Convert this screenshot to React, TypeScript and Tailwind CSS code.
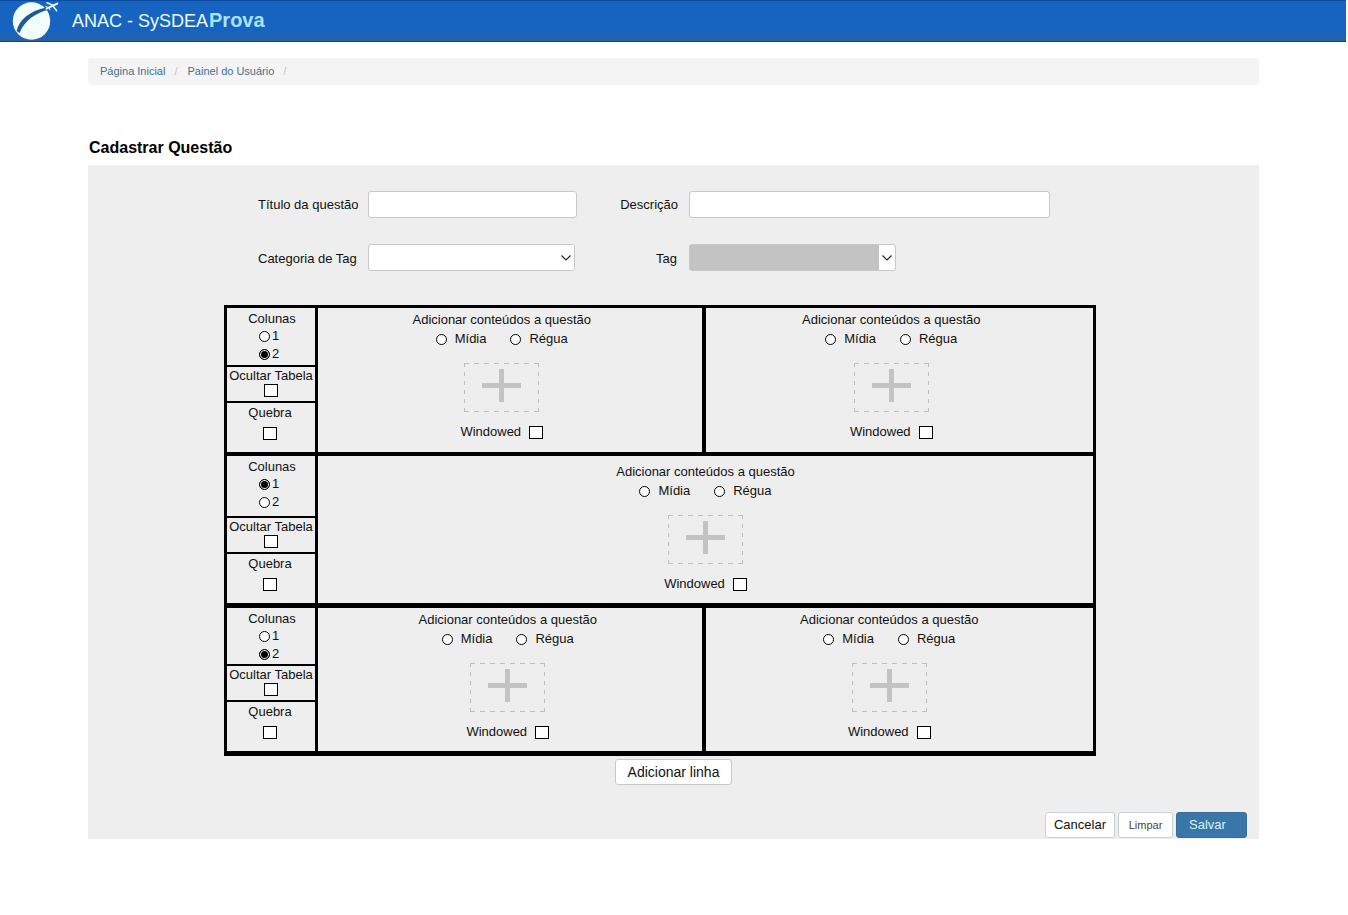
import React from "react";

type Cell = { id: string; inset: string };
type Row = { id: string; columns: 1 | 2; frame: string; top: string; cells: Cell[] };

const rows: Row[] = [
  {
    id: "r1",
    columns: 2,
    frame: "min-h-[148px] border-b-4 grid-cols-[91px_minmax(0,1fr)_minmax(0,1fr)]",
    top: "pt-[2px]",
    cells: [
      { id: "r1a", inset: "pr-4" },
      { id: "r1b", inset: "pr-4" },
    ],
  },
  {
    id: "r2",
    columns: 1,
    frame: "min-h-[152px] border-b-[5px] grid-cols-[91px_minmax(0,1fr)]",
    top: "pt-[6px]",
    cells: [{ id: "r2a", inset: "pr-0" }],
  },
  {
    id: "r3",
    columns: 2,
    frame: "min-h-[148px] border-b-[5px] grid-cols-[91px_minmax(0,1fr)_minmax(0,1fr)]",
    top: "pt-[2px]",
    cells: [
      { id: "r3a", inset: "pr-1" },
      { id: "r3b", inset: "pr-5" },
    ],
  },
];

const radioClass =
  "size-[11px] shrink-0 appearance-none rounded-full border border-black bg-white checked:bg-black checked:shadow-[inset_0_0_0_1px_#ffffff]";
const checkClass =
  "h-[13px] w-[14px] shrink-0 appearance-none border border-black bg-white checked:bg-black checked:shadow-[inset_0_0_0_2px_#ffffff]";
const fieldClass = "h-[27px] w-full rounded-[3px] border border-[#c8c8c8] bg-white px-2 text-[13px]";

function Logo() {
  return (
    <svg viewBox="0 0 48 42" className="h-[42px] w-12 shrink-0" aria-hidden="true">
      <circle cx="19.5" cy="21" r="18.7" fill="#f2fdfd" />
      <path d="M4.6 31C7 20.5 17 11 34.5 7.6L36 9.8C24 13 12.5 20.5 7.6 33Z" fill="#1f5c92" />
      <g stroke="#e6fafa" strokeLinecap="round" fill="none">
        <path d="M34.5 8.6L45.3 3.6" strokeWidth="1.9" />
        <path d="M41.5 5.4L35 2.8" strokeWidth="1.5" />
        <path d="M41 6L44.6 10.8" strokeWidth="1.5" />
        <path d="M36.3 7.6L33.6 6.2M37 7.8L38 9.9" strokeWidth="1" />
      </g>
    </svg>
  );
}

function SelectField({ id, disabled = false }: { id: string; disabled?: boolean }) {
  return (
    <div className="relative w-[207px]">
      <select
        id={id}
        disabled={disabled}
        className={
          disabled
            ? "block h-[27px] w-full appearance-none rounded-[3px] border border-[#c8c8c8] bg-[#c3c3c3] px-2 text-[13px]"
            : "block h-[27px] w-full appearance-none rounded-[3px] border border-[#c8c8c8] bg-white px-2 text-[13px]"
        }
      >
        <option value=""></option>
      </select>
      <span className="pointer-events-none absolute inset-y-px right-px flex w-4 items-center justify-center rounded-r-[2px] bg-white">
        <svg viewBox="0 0 10 6" className="h-[6px] w-[10px]" aria-hidden="true">
          <path d="M0.5 0.5L5 5L9.5 0.5" fill="none" stroke="#222222" strokeWidth="1.1" />
        </svg>
      </span>
    </div>
  );
}

function RowOptions({ row }: { row: Row }) {
  return (
    <div className="flex flex-col border-r-[3px] border-black text-center leading-[18px]">
      <fieldset className="flex flex-1 flex-col items-center border-b-2 border-black pt-[2px]">
        <legend className="float-left h-[17px] w-full pl-[2px]">Colunas</legend>
        {[1, 2].map((n) => (
          <label key={n} className="flex h-[18px] items-center gap-[2px] pr-1">
            <input type="radio" name={`${row.id}-columns`} defaultChecked={row.columns === n} className={radioClass} />
            {n}
          </label>
        ))}
      </fieldset>
      <label className="flex h-9 flex-col items-center border-b-2 border-black whitespace-nowrap">
        <span className="leading-[17px]">Ocultar Tabela</span>
        <input type="checkbox" className={checkClass} />
      </label>
      <label className="flex h-[49px] flex-col items-center gap-[5px] pt-[1px] pr-[2px]">
        <span className="leading-[18px]">Quebra</span>
        <input type="checkbox" className={checkClass} />
      </label>
    </div>
  );
}

function ContentCell({ cell, top, divided }: { cell: Cell; top: string; divided: boolean }) {
  return (
    <div className={`flex flex-col items-center ${top} ${cell.inset} ${divided ? "border-r-4 border-black" : ""}`}>
      <fieldset className="flex flex-col items-center">
        <legend className="float-left h-5 leading-5">Adicionar conteúdos a questão</legend>
        <div className="flex h-[18px] items-center gap-6">
          <label className="flex items-center gap-2">
            <input type="radio" name={`${cell.id}-kind`} className={radioClass} />
            Mídia
          </label>
          <label className="flex items-center gap-2">
            <input type="radio" name={`${cell.id}-kind`} className={radioClass} />
            Régua
          </label>
        </div>
      </fieldset>
      <button type="button" aria-label="Adicionar conteúdo" className="mt-[15px] block">
        <svg viewBox="0 0 75 49" className="h-[49px] w-[75px]" aria-hidden="true">
          <path d="M0 0.5H75M0 48.5H75" stroke="#bdbdbd" strokeDasharray="5 5" />
          <path d="M0.5 0V49M74.5 0V49" stroke="#bdbdbd" strokeDasharray="4 5" />
          <path d="M18 22.5h39M37.5 6v33" stroke="#c3c3c3" strokeWidth="5" fill="none" />
        </svg>
      </button>
      <label className="mt-[11px] flex h-[18px] items-center gap-2">
        Windowed
        <input type="checkbox" className={checkClass} />
      </label>
    </div>
  );
}

export default function App() {
  return (
    <div className="min-h-screen bg-white font-['Liberation_Sans',Arial,sans-serif] text-[13px] text-[#111111]">
      <header className="mr-[2px] flex h-[42px] items-center border-t border-b border-t-[#0a4aa0] border-b-[#1d4468] bg-linear-to-b from-[#1664c0] from-80% to-[#2a629c] pl-3">
        <Logo />
        <h1 className="flex items-baseline gap-px pb-[2px] pl-3 text-[18px] text-[#ecfbfb]">
          ANAC - SySDEA <span className="text-[20px] font-bold text-[#a9e3f8]">Prova</span>
        </h1>
      </header>

      <main className="mr-[89px] ml-[88px] pt-4">
        <nav className="h-[27px] rounded-[3px] bg-[#f4f4f4] px-3 text-[11px] leading-[27px] text-[#44708f]">
          <ol className="flex gap-[10px]">
            <li className="flex gap-[9px]">
              <a href="#inicio">Página Inicial</a>
              <span className="text-[#bfc4c8]">/</span>
            </li>
            <li className="flex gap-[9px]">
              <a href="#painel">Painel do Usuário</a>
              <span className="text-[#bfc4c8]">/</span>
            </li>
          </ol>
        </nav>

        <h2 className="mt-[53px] mb-[7px] pl-px text-[16px] leading-[20px] font-bold text-black">Cadastrar Questão</h2>

        <form className="bg-[#eeeeee] pt-[26px]" onSubmit={(e: React.FormEvent) => e.preventDefault()}>
          <div className="ml-[170px] grid grid-cols-[100px_209px_92px_361px] items-center gap-x-[10px] gap-y-[26px]">
            <label htmlFor="titulo" className="whitespace-nowrap">Título da questão</label>
            <input id="titulo" type="text" className={fieldClass} />
            <label htmlFor="descricao" className="pr-px text-right">Descrição</label>
            <input id="descricao" type="text" className={fieldClass} />
            <label htmlFor="categoria" className="pt-[2px] whitespace-nowrap">Categoria de Tag</label>
            <SelectField id="categoria" />
            <label htmlFor="tag" className="pt-[2px] pr-[2px] text-right">Tag</label>
            <SelectField id="tag" disabled />
          </div>

          <div className="mt-[34px] mr-[163px] ml-[136px] border-x-[3px] border-t-[3px] border-black">
            {rows.map((row) => (
              <div key={row.id} className={`grid border-black ${row.frame}`}>
                <RowOptions row={row} />
                {row.cells.map((cell, i) => (
                  <ContentCell key={cell.id} cell={cell} top={row.top} divided={i < row.cells.length - 1} />
                ))}
              </div>
            ))}
          </div>

          <div className="flex justify-center pt-[3px]">
            <button type="button" className="h-[26px] w-[117px] rounded-[3px] border border-[#c8c8c8] bg-white text-[14px]">
              Adicionar linha
            </button>
          </div>

          <div className="flex justify-end gap-[3px] pt-[27px] pr-3 pb-px">
            <button type="button" className="h-[26px] w-[70px] rounded-[3px] border border-[#c6d2d6] bg-white text-[13px]">
              Cancelar
            </button>
            <button type="reset" className="h-[26px] w-[55px] rounded-[3px] border border-[#c6d2d6] bg-white text-[11px] text-[#444444]">
              Limpar
            </button>
            <button type="submit" className="h-[26px] w-[71px] rounded-[3px] border border-[#3a6f9c] bg-[#3a76a8] pl-3 text-left text-[13px] text-[#d8f3f6]">
              Salvar
            </button>
          </div>
        </form>
      </main>
    </div>
  );
}
